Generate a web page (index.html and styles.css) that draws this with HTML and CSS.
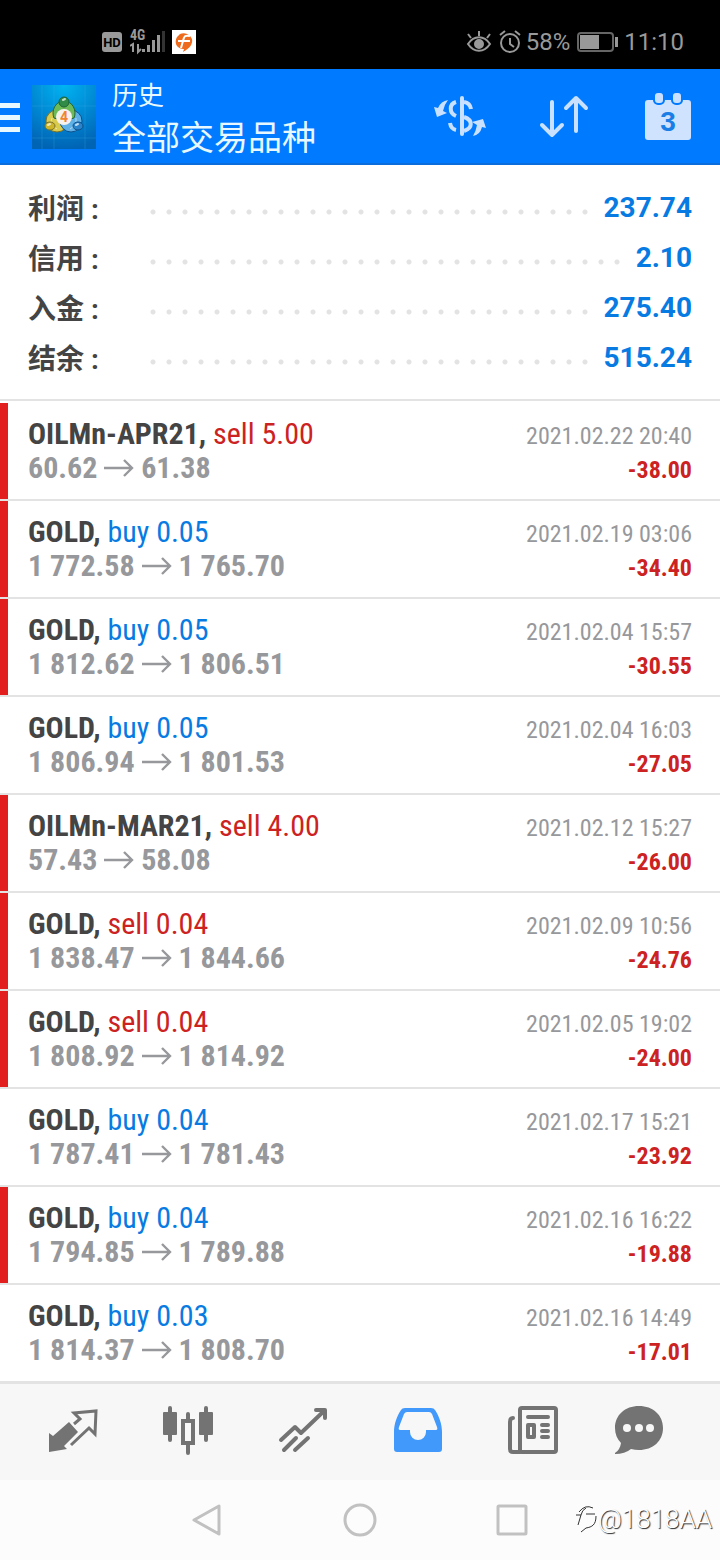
FILE: index.html
```
<!DOCTYPE html>
<html lang="zh-CN">
<head>
  <meta charset="UTF-8">
  <meta name="viewport" content="width=device-width, initial-scale=1">
  <title>历史</title>
  <link rel="stylesheet" href="styles.css">
</head>
<body>
  <div class="status-bar">
    <div class="status-group">
      <svg class="hd" width="22" height="22" viewBox="0 0 22 22">
        <rect x="1" y="1" width="20" height="20" rx="3" fill="#999"/>
        <text x="11" y="16" text-anchor="middle" class="hd-text">HD</text>
      </svg>
      <svg width="36" height="34" viewBox="0 -4 36 34" fill="#999">
        <text x="0" y="11" class="net-text">4G</text>
        <path d="M0 17l3-2v8M8 15v8l3-3" fill="none" stroke="#999" stroke-width="2"/>
        <path d="M12 20h3v3h-3zM17 16h3v7h-3zM22 11h3v12h-3zM27 6h3v17h-3z"/>
        <path d="M32 2h3v21h-3z" fill="#333"/>
      </svg>
      <svg class="notice" width="24" height="24" viewBox="0 0 24 24">
        <rect width="24" height="24" fill="#fff"/>
        <path d="M8 4a9 9 0 0 1 12 5c1 5-2 9-9 13l1-3C4 19 2 12 5 7z" fill="#ee6a1c"/>
        <path d="M18 6c-5-1-6 0-7 5l-2 7M6 11h12" fill="none" stroke="#fff" stroke-width="2"/>
      </svg>
    </div>
    <div class="status-group">
      <svg width="26" height="24" viewBox="0 0 26 24" fill="none" stroke="#999" stroke-width="2">
        <path d="M2 14c6-9 16-9 22 0-6 9-16 9-22 0zM2 4l3 4M13 1v5M24 4l-3 4"/>
        <circle cx="13" cy="14" r="4" fill="#999"/>
      </svg>
      <svg class="alarm" width="24" height="24" viewBox="0 0 24 24" fill="none" stroke="#999" stroke-width="2">
        <circle cx="12" cy="13" r="9"/>
        <path d="M12 8v6l4 3M2 5l5-4M22 5l-5-4"/>
      </svg>
      <span class="percent">58%</span>
      <svg width="42" height="22" viewBox="0 0 42 22">
        <rect x="1" y="2" width="35" height="18" rx="3" fill="none" stroke="#666" stroke-width="2"/>
        <path d="M3 4h19v14H3zM38 6h3v10h-3z" fill="#999"/>
      </svg>
      <span class="clock">11:10</span>
    </div>
  </div>

  <header class="header">
    <button class="menu" aria-label="Menu"><span></span><span></span><span></span></button>
    <svg class="app-icon" width="64" height="64" viewBox="0 0 64 64">
      <defs>
        <radialGradient id="bg" cx=".5" cy="0" r="1">
          <stop offset="0" stop-color="#00b4f2"/>
          <stop offset=".6" stop-color="#0083cf"/>
          <stop offset="1" stop-color="#0064b4"/>
        </radialGradient>
      </defs>
      <rect width="64" height="64" fill="url(#bg)"/>
      <path d="M0 21h64M0 53h64M10 0v64M22 0v64M53 0v64" stroke="#3fb5ea" stroke-opacity=".25"/>
      <g stroke-width="1">
        <circle cx="25" cy="36" r="11" fill="#d9cb4c" stroke="#76702a"/>
        <circle cx="39" cy="36" r="11" fill="#5fb0e4" stroke="#0c4f8d"/>
        <path d="M22 33a11 12 0 1 1 20 0l-10 3z" fill="#6dba58" stroke="#24633a"/>
        <path d="M25 29a8 8 0 0 1 14 0M20 33q-3 7 5 11M44 33q1 7-6 11" fill="none" stroke="#fff" stroke-opacity=".5"/>
        <ellipse cx="32" cy="17" rx="5" ry="5" fill="#2f8b46" stroke="#1d6137"/>
        <ellipse cx="18" cy="41" rx="5" ry="4" fill="#cdb52a" stroke="#76702a"/>
        <ellipse cx="46" cy="41" rx="5" ry="4" fill="#2b83c9" stroke="#0c4f8d"/>
      </g>
      <path d="M31 15l2-1M16 40l2-1M44 40l2-1" stroke="#fff" stroke-width="2" stroke-linecap="round" opacity=".7"/>
      <circle cx="32" cy="32" r="8" fill="#f6f1ec"/>
      <text x="32" y="37" text-anchor="middle" class="app-num">4</text>
    </svg>
    <div class="titles">
      <h1>历史</h1>
      <p>全部交易品种</p>
    </div>
    <div class="actions">
      <button aria-label="Deposits">
        <svg width="52" height="48" viewBox="0 0 52 48" fill="none" stroke="#c9e1ff" stroke-width="4">
          <path d="M28 5v36" stroke-linecap="round"/>
          <path d="M22 9c-7 2-7 11 0 14M30 9q6 1 7 7M30 24c9 3 9 11 0 14M16 30q1 6 6 7" stroke-width="4"/>
          <path d="M14 7Q7 8 4 15L0 14l3 10 10-4-4-2q1-6 5-11zM39 43q7-1 9-9l4 1-3-9-11 3 5 3q-1 6-4 11z" fill="#c9e1ff" stroke="none"/>
        </svg>
      </button>
      <button aria-label="Sort">
        <svg width="52" height="48" viewBox="-2 0 52 48" fill="none" stroke="#c9e1ff" stroke-width="4" stroke-linecap="round" stroke-linejoin="round">
          <path d="M12 9v33M2 32l10 10 10-10M36 38V5M26 15L36 5l10 10"/>
        </svg>
      </button>
      <button aria-label="Period">
        <svg width="52" height="48" viewBox="-2 0 52 48">
          <rect x="1" y="7" width="46" height="40" rx="3" fill="#cfe3ff"/>
          <g fill="#c9e1ff" stroke="#007aff" stroke-width="2">
            <rect x="10" y="-1" width="10" height="12" rx="4"/>
            <rect x="28" y="-1" width="10" height="12" rx="4"/>
          </g>
          <text x="24" y="38" text-anchor="middle" class="cal-num">3</text>
        </svg>
      </button>
    </div>
  </header>

  <main>
    <dl class="summary">
      <div class="summary-row"><dt>利润 :</dt><dd>237.74</dd></div>
      <div class="summary-row"><dt>信用 :</dt><dd>2.10</dd></div>
      <div class="summary-row"><dt>入金 :</dt><dd>275.40</dd></div>
      <div class="summary-row"><dt>结余 :</dt><dd>515.24</dd></div>
    </dl>

    <svg class="defs" width="0" height="0">
      <symbol id="arrow" viewBox="0 0 30 20">
        <path d="M0 10h28M20 2l8 8-8 8" fill="none" stroke="currentColor" stroke-width="2.4"/>
      </symbol>
    </svg>

    <ul class="trades">
      <li class="trade marked">
        <div><p class="symbol">OILMn-APR21, <span class="sell">sell 5.00</span></p><p class="prices">60.62 <svg class="arrow"><use href="#arrow"/></svg> 61.38</p></div>
        <div class="result"><time>2021.02.22 20:40</time><p class="loss">-38.00</p></div>
      </li>
      <li class="trade marked">
        <div><p class="symbol">GOLD, <span class="buy">buy 0.05</span></p><p class="prices">1 772.58 <svg class="arrow"><use href="#arrow"/></svg> 1 765.70</p></div>
        <div class="result"><time>2021.02.19 03:06</time><p class="loss">-34.40</p></div>
      </li>
      <li class="trade marked">
        <div><p class="symbol">GOLD, <span class="buy">buy 0.05</span></p><p class="prices">1 812.62 <svg class="arrow"><use href="#arrow"/></svg> 1 806.51</p></div>
        <div class="result"><time>2021.02.04 15:57</time><p class="loss">-30.55</p></div>
      </li>
      <li class="trade">
        <div><p class="symbol">GOLD, <span class="buy">buy 0.05</span></p><p class="prices">1 806.94 <svg class="arrow"><use href="#arrow"/></svg> 1 801.53</p></div>
        <div class="result"><time>2021.02.04 16:03</time><p class="loss">-27.05</p></div>
      </li>
      <li class="trade marked">
        <div><p class="symbol">OILMn-MAR21, <span class="sell">sell 4.00</span></p><p class="prices">57.43 <svg class="arrow"><use href="#arrow"/></svg> 58.08</p></div>
        <div class="result"><time>2021.02.12 15:27</time><p class="loss">-26.00</p></div>
      </li>
      <li class="trade marked">
        <div><p class="symbol">GOLD, <span class="sell">sell 0.04</span></p><p class="prices">1 838.47 <svg class="arrow"><use href="#arrow"/></svg> 1 844.66</p></div>
        <div class="result"><time>2021.02.09 10:56</time><p class="loss">-24.76</p></div>
      </li>
      <li class="trade marked">
        <div><p class="symbol">GOLD, <span class="sell">sell 0.04</span></p><p class="prices">1 808.92 <svg class="arrow"><use href="#arrow"/></svg> 1 814.92</p></div>
        <div class="result"><time>2021.02.05 19:02</time><p class="loss">-24.00</p></div>
      </li>
      <li class="trade">
        <div><p class="symbol">GOLD, <span class="buy">buy 0.04</span></p><p class="prices">1 787.41 <svg class="arrow"><use href="#arrow"/></svg> 1 781.43</p></div>
        <div class="result"><time>2021.02.17 15:21</time><p class="loss">-23.92</p></div>
      </li>
      <li class="trade marked">
        <div><p class="symbol">GOLD, <span class="buy">buy 0.04</span></p><p class="prices">1 794.85 <svg class="arrow"><use href="#arrow"/></svg> 1 789.88</p></div>
        <div class="result"><time>2021.02.16 16:22</time><p class="loss">-19.88</p></div>
      </li>
      <li class="trade">
        <div><p class="symbol">GOLD, <span class="buy">buy 0.03</span></p><p class="prices">1 814.37 <svg class="arrow"><use href="#arrow"/></svg> 1 808.70</p></div>
        <div class="result"><time>2021.02.16 14:49</time><p class="loss">-17.01</p></div>
      </li>
    </ul>
  </main>

  <nav class="tabs">
    <button aria-label="Quotes">
      <svg width="52" height="52" viewBox="0 0 52 52">
        <path d="M2 27l4 3 16-14 9 10-14 14 3 3-18 3z" fill="currentColor"/>
        <path d="M27 18l6-5-6-6 22-2-1 23-6-6-18 17" fill="none" stroke="currentColor" stroke-width="3"/>
      </svg>
    </button>
    <button aria-label="Chart">
      <svg width="52" height="52" viewBox="0 0 52 52" fill="currentColor">
        <rect x="1" y="6" width="14" height="23" rx="1"/>
        <rect x="37" y="6" width="14" height="23" rx="1"/>
        <path d="M8 2v32M44 2v32M26 8v5M26 39v8" stroke="currentColor" stroke-width="4" stroke-linecap="round"/>
        <rect x="21" y="15" width="10" height="22" fill="none" stroke="currentColor" stroke-width="4"/>
      </svg>
    </button>
    <button aria-label="Trade">
      <svg width="52" height="52" viewBox="0 0 52 52" fill="none" stroke="currentColor" stroke-width="4" stroke-linecap="round" stroke-linejoin="round">
        <path d="M4 34l14-13 6 6L47 5M39 4h9v8M19 32L7 44M31 32L18 44"/>
      </svg>
    </button>
    <button class="active" aria-label="History">
      <svg width="52" height="52" viewBox="0 0 52 52" fill="currentColor">
        <path fill-rule="evenodd" d="M13 2h26q3 0 4 2c4 6 7 14 7 22v17q0 3-3 3H5q-3 0-3-3V26C2 18 5 10 9 4q1-2 4-2zM15 6q-2 0-3 2L7 21q-1 3 1 3h10v2a8 8 0 0 0 16 0v-2h10q2 0 1-3L40 8q-1-2-3-2z"/>
      </svg>
    </button>
    <button aria-label="News">
      <svg width="52" height="52" viewBox="0 0 52 52" fill="none" stroke="currentColor" stroke-width="4" stroke-linecap="round">
        <rect x="13" y="2" width="36" height="44" rx="2"/>
        <path d="M13 46H6q-3 0-3-3V16q0-4 3-4M21 11h20M35 19h6M35 25h6M35 31h6"/>
        <rect x="21" y="19" width="6" height="12" stroke-linejoin="round"/>
      </svg>
    </button>
    <button aria-label="Messages">
      <svg width="52" height="52" viewBox="0 0 52 52" fill="currentColor">
        <path d="M26 0C12 0 2 9 2 22c0 6 2 11 6 15q-1 7-6 10v1q10 0 16-5 4 1 8 1c14 0 24-9 24-22S40 0 26 0z"/>
        <g fill="#f7f7f7"><circle cx="14" cy="22" r="4"/><circle cx="26" cy="22" r="4"/><circle cx="37" cy="22" r="4"/></g>
      </svg>
    </button>
  </nav>

  <div class="system-nav">
    <button aria-label="Back">
      <svg width="34" height="36" viewBox="0 0 34 36"><path d="M28 4v28L3 18z"/></svg>
    </button>
    <button aria-label="Home">
      <svg width="34" height="36" viewBox="0 0 34 36"><circle cx="17" cy="18" r="15"/></svg>
    </button>
    <button aria-label="Recent">
      <svg width="34" height="36" viewBox="0 0 34 36"><rect x="3" y="4" width="28" height="28" rx="1"/></svg>
    </button>
    <div class="watermark">
      <svg width="24" height="30" viewBox="0 0 24 30" fill="none" stroke="#333" stroke-width="1">
        <path d="M5 8q6-8 14-4M2 11h5l-3 10M12 10h9M22 12c0 9-4 11-10 12l-5 4M12 4q-4 2-5 7"/>
      </svg>
      <span>@1818AA</span>
    </div>
  </div>
</body>
</html>
```
FILE: styles.css
```
* {
  box-sizing: border-box;
}
body {
  margin: 0;
  background: #fff;
  color: #444;
  font-family: Roboto, "Noto Sans CJK SC", sans-serif;
}
h1, p, dl, dd, ul {
  margin: 0;
  padding: 0;
}
button {
  display: flex;
  align-items: center;
  justify-content: center;
  padding: 0;
  border: 0;
  background: none;
  color: inherit;
}
svg {
  display: block;
}

/* status bar */
.status-bar {
  display: flex;
  justify-content: space-between;
  height: 69px;
  padding: 15px 36px 0 101px;
  background: #000;
  color: #999;
  font-size: 24px;
}
.status-group {
  display: flex;
  align-items: center;
}
.hd {
  margin-right: 7px;
}
.notice {
  margin-left: 6px;
}
.alarm {
  margin: 0 4px 0 6px;
}
.percent {
  margin-right: 7px;
}
.clock {
  margin-left: 5px;
}
.hd-text {
  font-size: 13px;
  font-weight: bold;
}
.net-text {
  font-family: "Roboto Condensed", Roboto, sans-serif;
  font-size: 14px;
  font-weight: bold;
}

/* header */
.header {
  display: flex;
  align-items: center;
  height: 96px;
  padding: 2px 26px 0 0;
  background: #007aff;
  border-bottom: 2px solid #0a6ddb;
  color: #e8f8ff;
}
.menu {
  flex-direction: column;
  align-items: stretch;
  gap: 7px;
  width: 20px;
  margin-right: 12px;
}
.menu span {
  height: 5px;
  background: #e8f8ff;
}
.app-icon {
  margin-right: 16px;
}
.app-num {
  font-size: 14px;
  font-weight: bold;
  fill: #f08332;
}
.titles {
  flex: 1;
  padding-top: 2px;
}
.titles h1 {
  font-size: 26px;
  font-weight: normal;
  line-height: 40px;
}
.titles p {
  font-size: 34px;
  line-height: 44px;
}
.actions {
  display: flex;
  gap: 52px;
}
.cal-num {
  font-family: "Liberation Sans", sans-serif;
  font-size: 28px;
  font-weight: bold;
  fill: #1b7ee6;
}

/* account summary */
.summary {
  padding: 17px 28px;
  border-bottom: 2px solid #e3e3e3;
}
.summary-row {
  display: flex;
  align-items: center;
  height: 50px;
  font-size: 28px;
  font-weight: bold;
}
.summary-row dt {
  width: 117px;
}
.summary-row dd {
  display: flex;
  flex: 1;
  align-items: center;
  color: #087be3;
}
.summary-row dd::before {
  content: "";
  flex: 1;
  height: 16px;
  margin: 10px 11px 0 0;
  background: radial-gradient(circle, #e3e3e3 2px, transparent 3px) 0 0 / 16px 16px;
}

/* deals */
.defs {
  position: absolute;
}
.trades {
  padding-top: 2px;
  list-style: none;
}
.trade {
  display: flex;
  justify-content: space-between;
  height: 98px;
  padding: 14px 28px;
  border-bottom: 2px solid #e3e3e3;
  font-family: "Roboto Condensed", Roboto, sans-serif;
  line-height: 34px;
}
.trade:last-child {
  height: 96px;
  border-bottom: 0;
}
.marked {
  box-shadow: inset 8px 0 0 #e31e1e;
}
.symbol {
  font-size: 30px;
  font-weight: bold;
}
.symbol span {
  font-weight: normal;
}
.prices {
  color: #97989b;
  font-size: 30px;
  font-weight: bold;
}
.arrow {
  display: inline-block;
  width: 30px;
  height: 20px;
}
.result {
  padding-top: 2px;
  font-size: 24px;
  text-align: right;
}
.result time {
  color: #97989b;
}
.buy {
  color: #087be3;
}
.sell {
  color: #cc2222;
}
.loss {
  color: #cc2222;
  font-weight: bold;
}

/* bottom tabs */
.tabs {
  display: grid;
  grid-template-columns: repeat(5, 115fr) 97fr;
  height: 99px;
  padding: 0 33px 0 15px;
  border-top: 3px solid #e3e3e3;
  background: #f7f7f7;
  color: #737373;
}
.tabs .active {
  color: #4099fb;
}

/* system navigation */
.system-nav {
  position: relative;
  display: flex;
  align-items: center;
  justify-content: center;
  gap: 118px;
  height: 80px;
  background: #fcfcfc;
}
.system-nav button svg {
  fill: none;
  stroke: #c1c1c1;
  stroke-width: 3px;
  stroke-linejoin: round;
}
.watermark {
  position: absolute;
  right: 8px;
  bottom: 26px;
  display: flex;
  align-items: center;
  color: #fff;
  font-size: 26px;
  font-weight: 300;
  text-shadow: 1px 1px 1px #222;
}
```
